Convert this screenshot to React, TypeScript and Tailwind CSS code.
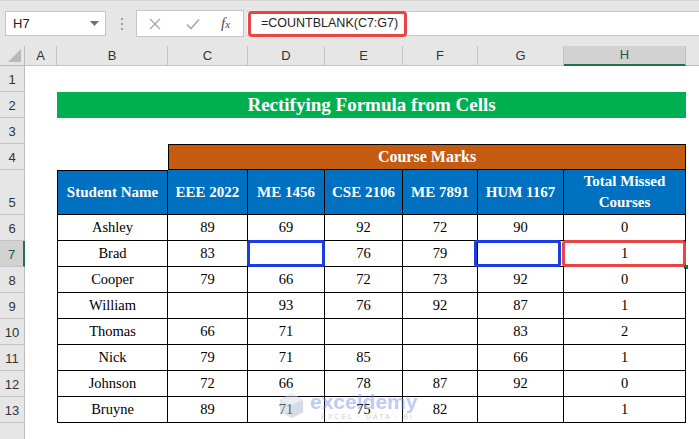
import React from 'react'

const COLS = ['A', 'B', 'C', 'D', 'E', 'F', 'G', 'H']

type Row = [string, string, string, string, string, string, string]

const DATA: Row[] = [
  ['Ashley', '89', '69', '92', '72', '90', '0'],
  ['Brad', '83', '', '76', '79', '', '1'],
  ['Cooper', '79', '66', '72', '73', '92', '0'],
  ['William', '', '93', '76', '92', '87', '1'],
  ['Thomas', '66', '71', '', '', '83', '2'],
  ['Nick', '79', '71', '85', '', '66', '1'],
  ['Johnson', '72', '66', '78', '87', '92', '0'],
  ['Bruyne', '89', '71', '75', '82', '', '1'],
]

const HEADERS = ['Student Name', 'EEE 2022', 'ME 1456', 'CSE 2106', 'ME 7891', 'HUM 1167']

function RowHeader({ n, active }: { n?: number; active?: boolean }) {
  return (
    <div
      className={`flex items-end justify-center pb-[2px] text-[13px] border-b border-[#c4c4c4] ${
        active
          ? 'bg-[#d2d2d2] text-[#1e5a3c] border-r-2 border-r-[#217346]'
          : 'bg-[#e6e6e6] text-[#333] border-r border-r-[#bdbdbd]'
      }`}
    >
      {n}
    </div>
  )
}

function Toolbar() {
  return (
    <div className="h-[46px] bg-[#e6e6e6] flex items-center border-t border-[#d6d6d6]">
      {/* Name box */}
      <div className="ml-[5px] w-[101px] h-[25px] bg-white border border-[#c6c6c6] flex items-center justify-between pl-[7px] pr-[6px]">
        <span className="text-[13px] text-[#222]">H7</span>
        <svg width="9" height="5" viewBox="0 0 9 5">
          <polygon points="0,0 9,0 4.5,5" fill="#707070" />
        </svg>
      </div>
      {/* dots */}
      <div className="ml-[15px] flex flex-col gap-[3px]">
        <span className="w-[2px] h-[2px] bg-[#9a9a9a]" />
        <span className="w-[2px] h-[2px] bg-[#9a9a9a]" />
        <span className="w-[2px] h-[2px] bg-[#9a9a9a]" />
      </div>
      {/* fx box */}
      <div className="ml-[13px] w-[108px] h-[27px] bg-white border border-[#c6c6c6] flex items-center">
        <svg className="ml-[12px]" width="12" height="12" viewBox="0 0 12 12">
          <path d="M1 1 L11 11 M11 1 L1 11" stroke="#a8a8a8" strokeWidth="1.4" />
        </svg>
        <svg className="ml-[25px]" width="14" height="12" viewBox="0 0 14 12">
          <path d="M1 6.5 L5 10.5 L13 1.5" stroke="#a8a8a8" strokeWidth="1.6" fill="none" />
        </svg>
        <span className="ml-[21px] text-[15px] italic text-[#505050] leading-none" style={{ fontFamily: '"Liberation Serif", serif' }}>
          f<span className="text-[11px]">x</span>
        </span>
      </div>
      {/* formula */}
      <div className="ml-[3px] flex-1 h-[25px] bg-white border-y border-[#c6c6c6] relative flex items-center">
        <span className="pl-[14px] text-[12.5px] text-[#222]">=COUNTBLANK(C7:G7)</span>
        <div className="absolute left-[1px] top-[-1px] w-[159px] h-[26px] border-[3px] border-[#e84545] rounded-[4px]" />
      </div>
    </div>
  )
}

export default function App() {
  const serif = { fontFamily: '"Liberation Serif", "Times New Roman", serif' }
  return (
    <div
      className="w-[699px] h-[439px] overflow-hidden bg-white relative"
      style={{ fontFamily: '"Liberation Sans", Arial, sans-serif' }}
    >
      <Toolbar />
      <div className="grid grid-cols-[25px_32px_111px_80px_77px_78px_75px_86px_122px_1fr] grid-rows-[20px_26px_26px_26px_26px_45px_26px_26px_26px_26px_26px_26px_26px_26px_26px]">
        {/* column header row */}
        <div className="bg-[#e6e6e6] border-r border-b border-[#bdbdbd] flex items-end justify-end p-[3px]">
          <svg width="13" height="13" viewBox="0 0 13 13">
            <polygon points="13,0 13,13 0,13" fill="#b8b8b8" />
          </svg>
        </div>
        {COLS.map((c) =>
          c === 'H' ? (
            <div
              key={c}
              className="bg-[#d2d2d2] border-r border-r-[#bdbdbd] border-b-2 border-b-[#217346] flex items-center justify-center text-[13px] text-[#1e5a3c]"
            >
              {c}
            </div>
          ) : (
            <div
              key={c}
              className="bg-[#e6e6e6] border-r border-b border-[#c4c4c4] flex items-center justify-center text-[13px] text-[#333]"
            >
              {c}
            </div>
          ),
        )}
        <div className="bg-[#e6e6e6] border-b border-[#bdbdbd]" />

        {/* row 1 */}
        <RowHeader n={1} />
        <div className="col-span-9" />

        {/* row 2 - title */}
        <RowHeader n={2} />
        <div />
        <div
          className="col-span-7 bg-[#00b050] flex items-center justify-center text-white font-bold text-[19px]"
          style={serif}
        >
          Rectifying Formula from Cells
        </div>
        <div />

        {/* row 3 */}
        <RowHeader n={3} />
        <div className="col-span-9" />

        {/* row 4 - course marks */}
        <RowHeader n={4} />
        <div />
        <div />
        <div
          className="col-span-6 bg-[#c55a11] border border-black flex items-center justify-center text-white font-bold text-[16px]"
          style={serif}
        >
          Course Marks
        </div>
        <div />

        {/* row 5 - headers */}
        <RowHeader n={5} />
        <div />
        {HEADERS.map((h, i) => (
          <div
            key={h}
            className={`bg-[#0070c0] border-r border-b border-black flex items-center justify-center text-white font-bold text-[15px] ${
              i === 0 ? 'border-l border-t' : ''
            }`}
            style={serif}
          >
            {h}
          </div>
        ))}
        <div
          className="bg-[#0070c0] border-r border-b border-black flex items-center justify-center text-center text-white font-bold text-[15px] leading-[21px]"
          style={serif}
        >
          Total Missed
          <br />
          Courses
        </div>
        <div />

        {/* data rows */}
        {DATA.map((row, r) => {
          const rowNum = r + 6
          const active = rowNum === 7
          return (
            <React.Fragment key={rowNum}>
              <RowHeader n={rowNum} active={active} />
              <div />
              {row.map((v, ci) => (
                <div
                  key={ci}
                  className={`relative border-r border-b border-black flex items-center justify-center text-[14.5px] text-black ${
                    ci === 0 ? 'border-l' : ''
                  }`}
                  style={serif}
                >
                  {v}
                  {active && ci === 2 && (
                    <div className="absolute -left-px -top-px -right-px -bottom-px border-[3px] border-[#1c3ce8] rounded-[3px]" />
                  )}
                  {active && ci === 5 && (
                    <div className="absolute left-[-4px] right-[2px] -top-px -bottom-px border-[3px] border-[#1c3ce8] rounded-[3px]" />
                  )}
                  {active && ci === 6 && (
                    <>
                      <div className="absolute left-[-2px] -right-px -top-px -bottom-px border-[3px] border-[#e84545] rounded-[4px]" />
                      <div className="absolute right-[-3px] bottom-[-3px] w-[4px] h-[4px] bg-[#217346]" />
                    </>
                  )}
                </div>
              ))}
              <div />
            </React.Fragment>
          )
        })}

        {/* row 14 (cut off) */}
        <RowHeader />
        <div className="col-span-9" />
      </div>

      {/* watermark */}
      <div className="absolute left-[278px] top-[391px] flex items-start opacity-45 pointer-events-none">
        <svg width="27" height="27" viewBox="0 0 28 28" className="mt-[1px]">
          <polygon points="14,1 26,8 26,21 14,27 2,21 2,8" fill="#b9c2d6" />
          <polygon points="14,1 26,8 14,14 2,8" fill="#d3d9e6" />
          <polygon points="14,14 26,8 26,21 14,27" fill="#a6b1c9" />
        </svg>
        <div className="ml-[5px] flex flex-col items-start">
          <span className="text-[21px] font-bold leading-[21px] text-[#6f8fe6]">exceldemy</span>
          <span className="text-[7px] tracking-[2px] text-[#8a93a6] leading-[9px] ml-[11px]">EXCEL · DATA · BI</span>
        </div>
      </div>
    </div>
  )
}
